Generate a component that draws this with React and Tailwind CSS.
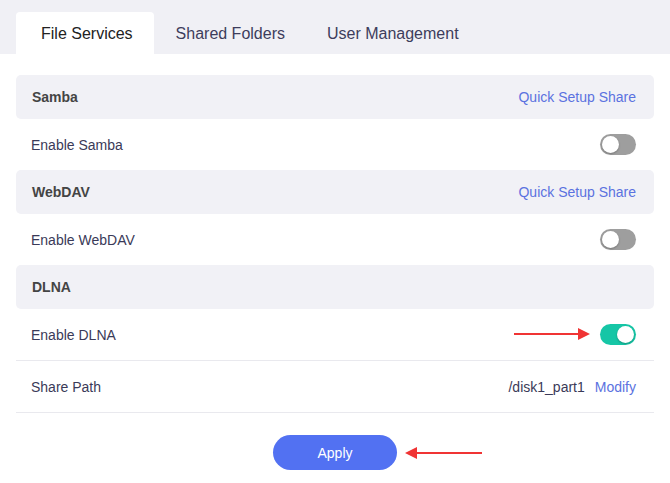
import React from "react";

const Toggle = ({ on }) => (
  <div
    className={`w-[36px] h-[21px] rounded-full p-[2px] flex items-center ${
      on ? "bg-[#16c6a6] justify-end" : "bg-[#9e9e9e] justify-start"
    }`}
  >
    <div className="w-[17px] h-[17px] rounded-full bg-white shadow-[0_1px_2px_rgba(0,0,0,0.25)]" />
  </div>
);

const SectionHeader = ({ title, link }) => (
  <div className="h-[44px] bg-[#f1f1f6] rounded-[5px] flex items-center justify-between pl-4 pr-[18px]">
    <span className="text-[14px] font-bold text-[#444]">{title}</span>
    {link && <span className="text-[14px] text-[#5b72e0]">{link}</span>}
  </div>
);

const Row = ({ label, border, children }) => (
  <div
    className={`flex items-center justify-between pl-[15px] pr-[18px] ${
      border ? "h-[52px] border-b border-[#e9e9ee]" : "h-[51px]"
    }`}
  >
    <span className="text-[14px] text-[#3a3a58] pt-[2px]">{label}</span>
    {children}
  </div>
);

const ArrowRight = () => (
  <svg width="78" height="14" viewBox="0 0 78 14">
    <line x1="0" y1="7" x2="66" y2="7" stroke="#f03434" strokeWidth="2" />
    <polygon points="64,1 76,7 64,13" fill="#f03434" />
  </svg>
);

const ArrowLeft = () => (
  <svg width="80" height="14" viewBox="0 0 80 14">
    <line x1="12" y1="7" x2="79" y2="7" stroke="#f03434" strokeWidth="2" />
    <polygon points="14,1 2,7 14,13" fill="#f03434" />
  </svg>
);

export default function App() {
  return (
    <div className="w-[670px] h-[483px] bg-white font-['Liberation_Sans',Arial,sans-serif] overflow-hidden">
      {/* Tabs */}
      <div className="h-[54px] bg-[#f0f0f5] flex items-end pl-4">
        <div className="h-[42px] pl-[25px] pr-[21px] pt-[2px] bg-white rounded-t-[4px] flex items-center text-[16px] text-[#222]">
          File Services
        </div>
        <div className="h-[42px] pl-[22px] pr-[20px] pt-[2px] flex items-center text-[16px] text-[#3d3d5c]">
          Shared Folders
        </div>
        <div className="h-[42px] pl-[22px] pt-[2px] flex items-center text-[16px] text-[#3d3d5c]">
          User Management
        </div>
      </div>

      {/* Content */}
      <div className="px-4 pt-[21px]">
        <SectionHeader title="Samba" link="Quick Setup Share" />
        <Row label="Enable Samba">
          <Toggle />
        </Row>
        <SectionHeader title="WebDAV" link="Quick Setup Share" />
        <Row label="Enable WebDAV">
          <Toggle />
        </Row>
        <SectionHeader title="DLNA" />
        <Row label="Enable DLNA" border>
          <div className="relative">
            <div className="absolute right-[44px] top-[3px]">
              <ArrowRight />
            </div>
            <Toggle on />
          </div>
        </Row>
        <Row label="Share Path" border>
          <div className="flex items-center gap-[10px] text-[14px] pt-[2px]">
            <span className="text-[#3a3a58]">/disk1_part1</span>
            <span className="text-[#5b72e0]">Modify</span>
          </div>
        </Row>

        <div className="flex justify-center pt-[22px]">
          <div className="relative">
            <button className="w-[124px] h-[35px] rounded-full bg-[#5271f2] text-white text-[14px] pt-[1px]">
              Apply
            </button>
            <div className="absolute left-[130px] top-[11px]">
              <ArrowLeft />
            </div>
          </div>
        </div>
      </div>
    </div>
  );
}
